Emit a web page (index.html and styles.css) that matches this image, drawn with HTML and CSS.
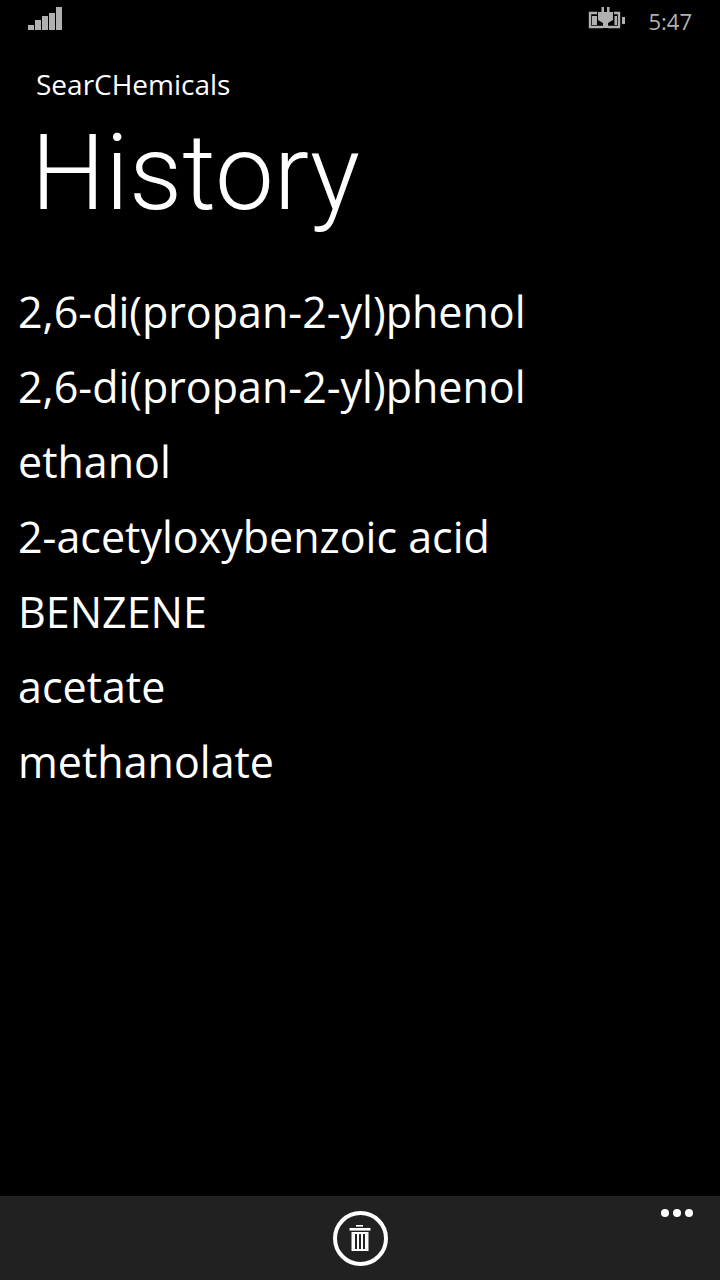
FILE: index.html
```html
<!DOCTYPE html>
<html lang="en">

<head>
    <meta charset="UTF-8">
    <meta name="viewport" content="width=device-width, initial-scale=1.0">
    <title>History</title>
    <link rel="stylesheet" href="styles.css">
</head>

<body>
    <div id="phone">
        <div class="status-bar">
            <svg class="signal" width="36" height="24" viewBox="0 0 36 24">
                <rect x="0" y="18" width="6" height="5" />
                <rect x="7" y="13" width="6" height="10" />
                <rect x="14" y="9" width="6" height="14" />
                <rect x="21" y="6" width="6" height="17" />
                <rect x="28" y="0" width="6" height="23" />
            </svg>
            <div class="status-right">
                <svg class="battery" width="38" height="22" viewBox="0 0 38 22">
                    <path d="M9 6H2V20H15M26 6H31V20H20" fill="none" stroke="#b0b0b0" stroke-width="2.4" />
                    <path d="M4 9H9V18H4ZM26.500 9H29V18H26.500Z" fill="#b0b0b0" />
                    <path d="M13.500 0H16V5H19V0H21.500V5H25V13L20 16V21H15V16L10 13V5H13.500Z" fill="#b0b0b0" />
                    <rect x="34" y="10" width="3" height="7" fill="#b0b0b0" />
                </svg>
                <span class="clock">5:47</span>
            </div>
        </div>

        <div class="app-name">SearCHemicals</div>
        <h1>History</h1>

        <ul class="history">
            <li>2,6-di(propan-2-yl)phenol</li>
            <li>2,6-di(propan-2-yl)phenol</li>
            <li>ethanol</li>
            <li>2-acetyloxybenzoic acid</li>
            <li>BENZENE</li>
            <li>acetate</li>
            <li>methanolate</li>
        </ul>

        <div class="app-bar">
            <div class="round-button">
                <svg width="24" height="28" viewBox="0 0 24 28">
                    <rect x="8" y="0" width="7" height="1.6" fill="#fff" />
                    <rect x="1.5" y="3" width="21" height="2.6" fill="#fff" />
                    <path d="M3.5 7H20.5V26H3.5ZM7 9V24H9V9ZM11 9V24H13V9ZM15 9V24H17V9Z" fill="#fff" fill-rule="evenodd" />
                </svg>
            </div>
            <div class="dots"><span></span><span></span><span></span></div>
        </div>
    </div>
</body>

</html>
```

FILE: styles.css
```css
* {
    box-sizing: border-box;
}

body {
    margin: 0;
    background-color: #000;
    color: #fff;
    font-family: "Open Sans", Arial, sans-serif;
}

#phone {
    width: 720px;
    height: 1280px;
    display: flex;
    flex-direction: column;
    overflow: hidden;
}

.status-bar {
    height: 53px;
    padding: 7px 28px 0;
    display: flex;
    justify-content: space-between;
    align-items: flex-start;
}

.signal {
    fill: #b0b0b0;
}

.status-right {
    display: flex;
    align-items: flex-start;
    gap: 22px;
}

.clock {
    font-size: 22px;
    line-height: 28px;
    color: #b0b0b0;
}

.app-name {
    font-size: 28px;
    line-height: 40px;
    margin: 11px 0 0 36px;
}

h1 {
    font-family: Roboto, "Open Sans", sans-serif;
    font-size: 105px;
    line-height: 124px;
    font-weight: 300;
    margin: 8px 0 0 31px;
}

.history {
    list-style: none;
    margin: 38px 0 0;
    padding: 0 0 0 18px;
    flex: 1;
}

.history li {
    font-size: 43px;
    line-height: 75px;
}

.app-bar {
    height: 84px;
    background-color: #212121;
    position: relative;
    display: flex;
    justify-content: center;
    padding-top: 15px;
}

.round-button {
    width: 55px;
    height: 55px;
    border: 4px solid #fff;
    border-radius: 50%;
    display: flex;
    align-items: center;
    justify-content: center;
}

.dots {
    position: absolute;
    top: 13px;
    left: 661px;
    display: flex;
    gap: 4px;
}

.dots span {
    width: 8px;
    height: 8px;
    border-radius: 50%;
    background-color: #fff;
}
```
